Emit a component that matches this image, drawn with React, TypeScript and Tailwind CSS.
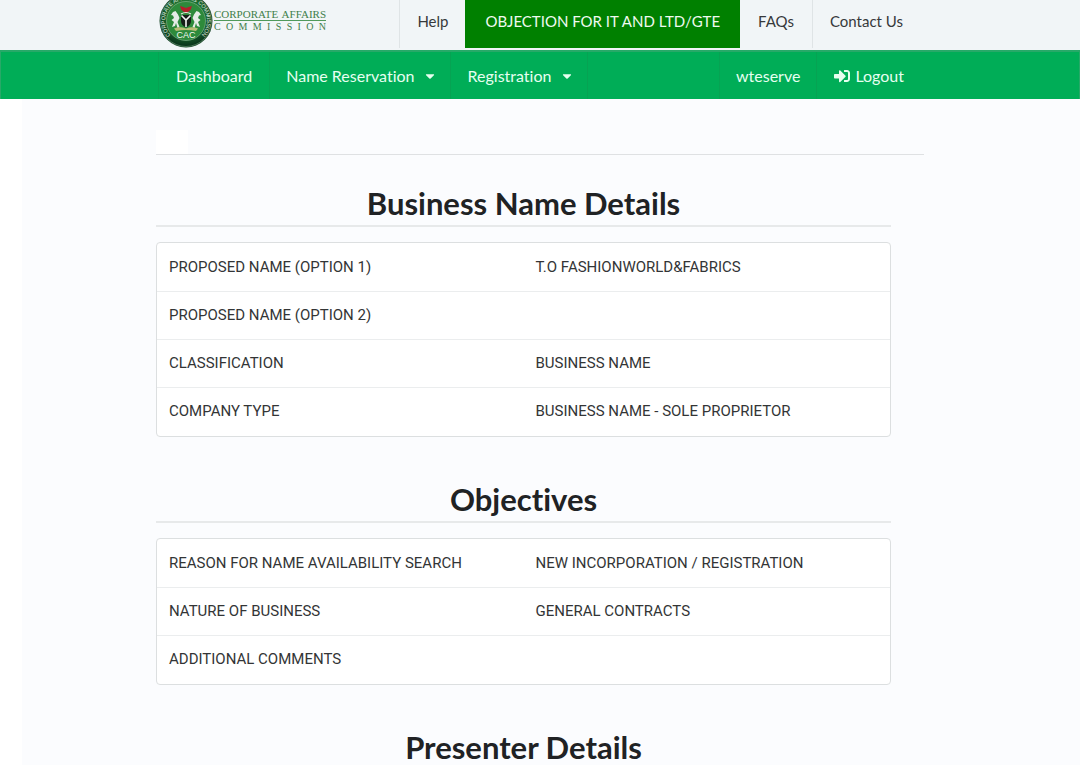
import React from 'react';
import { FaCaretDown, FaSignInAlt } from 'react-icons/fa';

interface DetailRow {
  label: string;
  value: string;
}

interface DetailSectionProps {
  title: string;
  rows: DetailRow[];
}

const businessRows: DetailRow[] = [
  { label: 'PROPOSED NAME (OPTION 1)', value: 'T.O FASHIONWORLD&FABRICS' },
  { label: 'PROPOSED NAME (OPTION 2)', value: '' },
  { label: 'CLASSIFICATION', value: 'BUSINESS NAME' },
  { label: 'COMPANY TYPE', value: 'BUSINESS NAME - SOLE PROPRIETOR' },
];

const objectiveRows: DetailRow[] = [
  { label: 'REASON FOR NAME AVAILABILITY SEARCH', value: 'NEW INCORPORATION / REGISTRATION' },
  { label: 'NATURE OF BUSINESS', value: 'GENERAL CONTRACTS' },
  { label: 'ADDITIONAL COMMENTS', value: '' },
];

const Emblem: React.FC = () => (
  <svg width="54" height="48" viewBox="0 6 54 48" role="img" aria-label="CAC seal" className="shrink-0">
    <defs>
      <radialGradient id="seal" cx="50%" cy="40%" r="60%">
        <stop offset="0" stopColor="#43a24c" />
        <stop offset="0.6" stopColor="#1d6b2f" />
        <stop offset="1" stopColor="#08301a" />
      </radialGradient>
      <path id="ring" d="M13.2 42.8 A21 21 0 1 1 40.8 42.8" />
    </defs>
    <circle cx="27" cy="27" r="26.5" fill="#164426" />
    <circle cx="27" cy="27" r="25.5" fill="url(#seal)" stroke="#6f9a78" strokeWidth="0.6" />
    <circle cx="27" cy="27" r="19.5" fill="#2d8a3b" stroke="#8db996" strokeWidth="0.6" />
    <text fontFamily="Liberation Sans, sans-serif" fontSize="5.5" fill="#e6f2e7" textAnchor="middle">
      <textPath href="#ring" startOffset="50%">CORPORATE AFFAIRS COMMISSION</textPath>
    </text>
    {/* eagle and wreath */}
    <path d="M27 14 L24.5 13 L21 12 L22.5 16 L25 18 L27 19.5 L29 18 L31.5 16 L33 12 L29.5 13 Z" fill="#b3202a" />
    <path d="M22 20 Q27 17 32 20" stroke="#e8efe2" strokeWidth="1.2" fill="none" />
    {/* shield */}
    <path d="M22 21 H32 V27 Q32 31 27 33.5 Q22 31 22 27 Z" fill="#161c18" />
    <path d="M22.5 21.5 L27 26 L31.5 21.5 M27 26 V33" stroke="#f4f6f2" strokeWidth="1.6" fill="none" />
    {/* horses */}
    <path d="M20.5 33 L18.5 28 L20.5 24 L19 20.5 L16.5 17 L14 18 L12 21 L14 21.5 L15 24 L12.5 26 L15 28 L13 33 L16 32 L17 29 L18.5 34 Z" fill="#e6ece7" />
    <path d="M33.5 33 L35.5 28 L33.5 24 L35 20.5 L37.5 17 L40 18 L42 21 L40 21.5 L39 24 L41.5 26 L39 28 L41 33 L38 32 L37 29 L35.5 34 Z" fill="#e6ece7" />
    <path d="M15 34.5 Q21 32 27 34.5 Q33 32 39 34.5 L37 37 Q27 35 17 37 Z" fill="#b9bd75" />
    <text x="27" y="44" textAnchor="middle" fontFamily="Liberation Sans, sans-serif" fontSize="9" fill="#f2f7f2">CAC</text>
  </svg>
);

const Logo: React.FC = () => (
  <a href="#" className="flex items-start pl-[3px]">
    <Emblem />
    <span className="w-[113px] pt-2 pl-px font-['Liberation_Serif',serif] text-[11px] leading-3 text-[#3f7f4a] whitespace-nowrap">
      <span className="block [text-align-last:justify] border-b border-[#4f9a5b]">CORPORATE AFFAIRS</span>
      <span className="block [text-align-last:justify] text-[10px] leading-[11px]">C O M M I S S I O N</span>
    </span>
  </a>
);

const DetailSection: React.FC<DetailSectionProps> = ({ title, rows }) => (
  <section className="mb-[43px]">
    <h1 className="pb-[3px] mb-[15px] border-b-2 border-[#e7e9ea] text-center text-[31px] leading-[38px] font-bold text-[#202224]">
      {title}
    </h1>
    {rows.length > 0 && (
      <div className="py-px border border-[#dcdfe0] rounded bg-white overflow-hidden">
        <table className="w-full table-fixed font-[Roboto,sans-serif] text-[15px] leading-[23px] text-[#333536]">
          <tbody>
            {rows.map((row) => (
              <tr key={row.label} className="border-b border-[#ebedee] last:border-b-0">
                <th scope="row" className="px-3 py-3 text-left font-normal">{row.label}</th>
                <td className="px-3 py-3">{row.value}</td>
              </tr>
            ))}
          </tbody>
        </table>
      </div>
    )}
  </section>
);

const App: React.FC = () => {
  return (
    <div className="h-screen overflow-hidden bg-[#fbfcfe] font-[Lato,sans-serif] text-base [font-variant-ligatures:none]">
      {/* Top bar */}
      <header className="bg-[#f1f5f7] pb-[2px]">
        <div className="w-full max-w-3xl mx-auto flex items-stretch justify-between">
          <Logo />
          <nav className="flex text-[15px] text-[#37393b] leading-5 whitespace-nowrap">
            <a href="#" className="px-[17px] pt-[11px] pb-[17px] border-l border-[#dfe4e6]">Help</a>
            <a href="#" className="px-5 pt-[11px] pb-[17px] bg-[#008000] text-[#effaf0]">OBJECTION FOR IT AND LTD/GTE</a>
            <a href="#" className="px-[18px] pt-[11px] pb-[17px] border-r border-[#dfe4e6]">FAQs</a>
            <a href="#" className="pl-[17px] pr-[21px] pt-[11px] pb-[17px]">Contact Us</a>
          </nav>
        </div>
      </header>

      {/* Main menu */}
      <div className="bg-[#00ad57] border-x border-t-2 border-[#27a968] text-[#e6fff0]">
        <div className="w-full max-w-3xl mx-auto flex justify-between leading-5 whitespace-nowrap">
          <nav className="flex pl-[2px]">
            <a href="#" className="px-[17px] pt-[14px] pb-[13px] border-x border-[#06a353]">Dashboard</a>
            <button className="flex items-center pl-4 pr-[13px] pt-[14px] pb-[13px] border-r border-[#06a353]">
              Name Reservation <FaCaretDown size={14} className="ml-2" />
            </button>
            <button className="flex items-center pl-[17px] pr-[13px] pt-[14px] pb-[13px] border-r border-[#06a353]">
              Registration <FaCaretDown size={14} className="ml-[9px]" />
            </button>
          </nav>
          <nav className="flex">
            <a href="#" className="px-4 pt-[14px] pb-[13px] border-x border-[#06a353]">wteserve</a>
            <a href="#" className="flex items-center pl-[17px] pr-5 pt-[14px] pb-[13px]">
              <FaSignInAlt size={16} className="mr-[5px]" />
              Logout
            </a>
          </nav>
        </div>
      </div>

      <main className="border-l-[22px] border-white pr-[22px] pt-[31px]">
        <div className="w-full max-w-3xl mx-auto">
          <div className="border-b border-[#dfe1e3] mb-[29px]">
            <div className="w-8 h-6 bg-white" />
          </div>
          <div className="pr-[33px]">
            <DetailSection title="Business Name Details" rows={businessRows} />
            <DetailSection title="Objectives" rows={objectiveRows} />
            <DetailSection title="Presenter Details" rows={[]} />
          </div>
        </div>
      </main>
    </div>
  );
};

export default App;
